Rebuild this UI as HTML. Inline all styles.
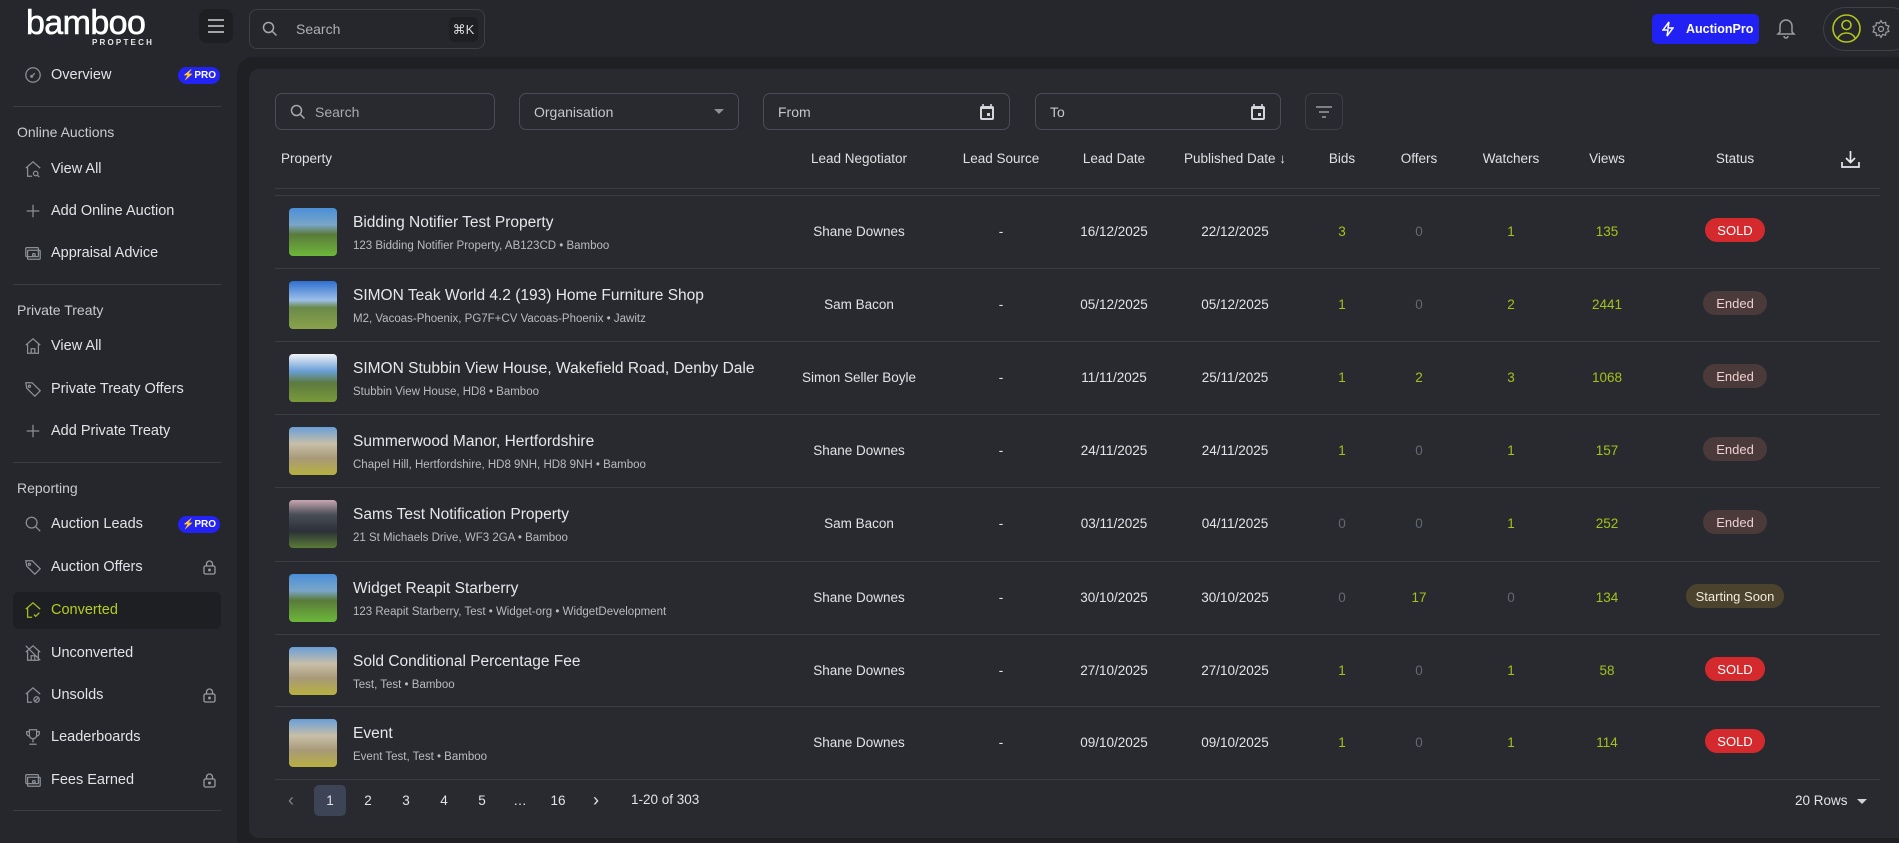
<!DOCTYPE html>
<html><head><meta charset="utf-8">
<style>
*{box-sizing:border-box;margin:0;padding:0}
body{width:1899px;height:843px;overflow:hidden;background:#25272c;font-family:"Liberation Sans",sans-serif;color:#e4e5e8;position:relative}
.abs{position:absolute}
.side .it{position:absolute;left:24px;height:30px;display:flex;align-items:center;font-size:14.5px;color:#e2e3e6}
.side .it svg{width:18px;height:18px;margin-right:9px;stroke:#8c8f96;fill:none;stroke-width:1.4}
.sec{position:absolute;left:17px;font-size:14px;color:#c9cbd0}
.div{position:absolute;left:13px;width:208px;height:1px;background:#3a3d44}
.pro{position:absolute;left:178px;width:42px;height:17px;border-radius:9px;background:#2323f5;color:#fff;font-size:10px;font-weight:bold;display:flex;align-items:center;justify-content:center}
.lock{position:absolute;left:203px;width:13px;height:15px}
.inp{position:absolute;top:93px;height:37px;border:1px solid #4a4d55;border-radius:7px;font-size:14px;color:#c5c7cc;display:flex;align-items:center;padding-left:14px}
.th{position:absolute;top:151px;font-size:13.5px;color:#dfe0e3;transform:translateX(-50%);white-space:nowrap}
.row{position:absolute;left:275px;width:1605px;height:73px;border-top:1px solid #3a3d44}
.c{position:absolute;top:28px;font-size:13.5px;transform:translateX(-50%);white-space:nowrap;color:#e2e3e6}
.g{color:#a3c21a}.z{color:#656870}
.thumb{position:absolute;left:14px;top:12px;width:48px;height:48px;border-radius:4px}
.t{position:absolute;left:78px;top:18px;font-size:15.5px;color:#e6e7ea;white-space:nowrap}
.s{position:absolute;left:78px;top:44px;font-size:11.5px;color:#b9bbc1;white-space:nowrap}
.b{position:absolute;top:22px;height:24px;border-radius:12px;font-size:13px;display:flex;align-items:center;justify-content:center;transform:translateX(-50%)}
.sold{background:#d42a2d;color:#fff;width:60px}
.end{background:#4a3a3a;color:#f0d0d0;width:64px}
.soon{background:#4c432e;color:#f1eadb;width:98px}
.pg{position:absolute;top:785px;width:32px;height:31px;display:flex;align-items:center;justify-content:center;font-size:13.5px;color:#e2e3e6;border-radius:5px}
</style></head><body>
<!-- header -->
<div class="abs" style="left:26px;top:6px;font-size:34px;color:#fff;letter-spacing:-0.6px;line-height:34px;-webkit-text-stroke:0.6px #fff">bamboo</div>
<div class="abs" style="left:92px;top:38px;font-size:8px;font-weight:bold;letter-spacing:2.2px;color:#e8e8e8">PROPTECH</div>
<div class="abs" style="left:199px;top:9px;width:34px;height:34px;border-radius:8px;background:#1d1f23;display:flex;align-items:center;justify-content:center">
<svg width="18" height="14" viewBox="0 0 18 14" stroke="#d0d2d6" stroke-width="1.6"><path d="M1 1h16M1 7h16M1 13h16"/></svg></div>
<div class="abs" style="left:249px;top:9px;width:236px;height:40px;border:1px solid #3d4047;border-radius:8px;display:flex;align-items:center">
<svg style="margin-left:12px" width="16" height="16" viewBox="0 0 16 16" fill="none" stroke="#a6a8ae" stroke-width="1.5"><circle cx="6.5" cy="6.5" r="5"/><path d="M10.5 10.5l4 4"/></svg>
<span style="margin-left:18px;font-size:14px;color:#aeb0b6">Search</span>
<span style="position:absolute;right:6px;top:7px;width:29px;height:25px;background:#1d1f23;border-radius:5px;font-size:13px;color:#d7d8db;display:flex;align-items:center;justify-content:center">⌘K</span></div>
<div class="abs" style="left:1652px;top:14px;width:107px;height:30px;background:#2121f4;border-radius:5px;display:flex;align-items:center;color:#fff;font-size:12.5px;font-weight:bold">
<svg style="margin:0 12px 0 10px" width="12" height="16" viewBox="0 0 12 16" fill="none" stroke="#fff" stroke-width="1.5"><path d="M7 1L1 9h5l-1 6 6-8H6z"/></svg>AuctionPro</div>
<svg class="abs" style="left:1776px;top:17px" width="20" height="22" viewBox="0 0 20 22" fill="none" stroke="#9a9ca2" stroke-width="1.5"><path d="M4 15V9a6 6 0 0 1 12 0v6l2 2H2z"/><path d="M8 19a2 2 0 0 0 4 0"/></svg>
<div class="abs" style="left:1823px;top:7px;width:90px;height:44px;border:1px solid #3e4148;border-radius:22px"></div>
<svg class="abs" style="left:1832px;top:14px" width="29" height="29" viewBox="0 0 29 29" fill="none" stroke="#b3c51c" stroke-width="1.6"><circle cx="14.5" cy="14.5" r="13.5"/><circle cx="14.5" cy="11" r="4.5"/><path d="M6 24c2-4 5-5 8.5-5s6.5 1 8.5 5"/></svg>
<svg class="abs" style="left:1871px;top:19px" width="20" height="20" viewBox="0 0 24 24" fill="none" stroke="#9a9ca2" stroke-width="1.5"><circle cx="12" cy="12" r="3"/><path d="M12 2l2 3 3.5-1 .5 3.5 3.5 1-1.5 3.5 1.5 3-3.5 1-.5 3.5-3.5-1L12 22l-2-3-3.5 1-.5-3.5-3.5-1L4 12 2.5 9 6 8l.5-3.5L10 5z"/></svg>
<!-- sidebar -->
<div class="side">
<div class="it" style="top:60px"><svg viewBox="0 0 20 20"><circle cx="10" cy="10" r="8"/><path d="M8 12l4-4"/><circle cx="8.5" cy="11.5" r="1"/></svg>Overview</div>
<div class="pro" style="top:67px">⚡PRO</div>
<div class="div" style="top:106px"></div>
<div class="sec" style="top:124px">Online Auctions</div>
<div class="it" style="top:154px"><svg viewBox="0 0 20 20"><path d="M2 9l8-7 8 7M4 8v10h5"/><circle cx="13" cy="15" r="2.5"/><path d="M15 17l2 2"/></svg>View All</div>
<div class="it" style="top:196px"><svg viewBox="0 0 20 20"><path d="M10 3v14M3 10h14"/></svg>Add Online Auction</div>
<div class="it" style="top:238px"><svg viewBox="0 0 20 20"><rect x="2" y="4" width="14" height="10" rx="1"/><rect x="4" y="7" width="14" height="10" rx="1"/><circle cx="11" cy="12" r="1.5"/></svg>Appraisal Advice</div>
<div class="div" style="top:284px"></div>
<div class="sec" style="top:302px">Private Treaty</div>
<div class="it" style="top:331px"><svg viewBox="0 0 20 20"><path d="M2 9l8-7 8 7M4 8v10h12V8"/><path d="M8 18v-5h4v5"/></svg>View All</div>
<div class="it" style="top:374px"><svg viewBox="0 0 20 20"><path d="M2 3h7l9 9-6 6-9-9z"/><circle cx="6" cy="7" r="1.2"/></svg>Private Treaty Offers</div>
<div class="it" style="top:416px"><svg viewBox="0 0 20 20"><path d="M10 3v14M3 10h14"/></svg>Add Private Treaty</div>
<div class="div" style="top:462px"></div>
<div class="sec" style="top:480px">Reporting</div>
<div class="it" style="top:509px"><svg viewBox="0 0 20 20"><circle cx="8.5" cy="8.5" r="6"/><path d="M13 13l5 5"/></svg>Auction Leads</div>
<div class="pro" style="top:516px">⚡PRO</div>
<div class="it" style="top:552px"><svg viewBox="0 0 20 20"><path d="M2 3h7l9 9-6 6-9-9z"/><circle cx="6" cy="7" r="1.2"/></svg>Auction Offers</div>
<svg class="lock" style="top:560px" viewBox="0 0 13 15" fill="none" stroke="#9a9ca2" stroke-width="1.3"><rect x="1" y="6" width="11" height="8" rx="1.5"/><path d="M3.5 6V4a3 3 0 0 1 6 0v2"/><circle cx="6.5" cy="10" r=".8"/></svg>
<div class="abs" style="left:13px;top:592px;width:208px;height:37px;border-radius:6px;background:#1d1f23"></div>
<div class="it" style="top:595px;color:#b6cc1e"><svg viewBox="0 0 20 20" style="stroke:#a8bd1c"><path d="M2 9l8-7 8 7M4 8v10h5"/><path d="M11 15l2 2 4-4"/></svg>Converted</div>
<div class="it" style="top:638px"><svg viewBox="0 0 20 20"><path d="M2 9l8-7 8 7M4 8v10h12V8M8 18v-5h4v5M2 2l16 16"/></svg>Unconverted</div>
<div class="it" style="top:680px"><svg viewBox="0 0 20 20"><path d="M2 9l8-7 8 7M4 8v10h5"/><circle cx="14" cy="15" r="3"/><path d="M12 17l4-4"/></svg>Unsolds</div>
<svg class="lock" style="top:688px" viewBox="0 0 13 15" fill="none" stroke="#9a9ca2" stroke-width="1.3"><rect x="1" y="6" width="11" height="8" rx="1.5"/><path d="M3.5 6V4a3 3 0 0 1 6 0v2"/><circle cx="6.5" cy="10" r=".8"/></svg>
<div class="it" style="top:722px"><svg viewBox="0 0 20 20"><path d="M6 2h8v6a4 4 0 0 1-8 0zM6 4H3v2a3 3 0 0 0 3 3M14 4h3v2a3 3 0 0 1-3 3M10 12v4M6 18h8"/></svg>Leaderboards</div>
<div class="it" style="top:765px"><svg viewBox="0 0 20 20"><rect x="2" y="4" width="14" height="10" rx="1"/><rect x="4" y="7" width="14" height="10" rx="1"/><circle cx="11" cy="12" r="1.5"/></svg>Fees Earned</div>
<svg class="lock" style="top:773px" viewBox="0 0 13 15" fill="none" stroke="#9a9ca2" stroke-width="1.3"><rect x="1" y="6" width="11" height="8" rx="1.5"/><path d="M3.5 6V4a3 3 0 0 1 6 0v2"/><circle cx="6.5" cy="10" r=".8"/></svg>
<div class="div" style="top:810px"></div>
</div>
<!-- main -->
<div class="abs" style="left:237px;top:57px;width:1662px;height:786px;background:#1f2024;border-top-left-radius:16px"></div>
<div class="abs" style="left:249px;top:69px;width:1650px;height:769px;background:#282a30;border-radius:10px 0 0 10px"></div>
<div class="inp" style="left:275px;width:220px"><svg width="16" height="16" viewBox="0 0 16 16" fill="none" stroke="#a6a8ae" stroke-width="1.5"><circle cx="6.5" cy="6.5" r="5"/><path d="M10.5 10.5l4 4"/></svg><span style="margin-left:9px;color:#a9abb1">Search</span></div>
<div class="inp" style="left:519px;width:220px">Organisation<span style="position:absolute;right:14px;top:15px;border:5px solid transparent;border-top:5px solid #8d9096"></span></div>
<div class="inp" style="left:763px;width:247px">From<svg style="position:absolute;right:14px;top:9px" width="16" height="18" viewBox="0 0 16 18"><rect x="1" y="3" width="14" height="14" rx="2" fill="#d4d6da"/><rect x="3" y="6" width="10" height="9" fill="#282a30"/><rect x="8" y="10" width="3" height="3" fill="#d4d6da"/><path d="M4 1v3M12 1v3" stroke="#d4d6da" stroke-width="1.6"/></svg></div>
<div class="inp" style="left:1035px;width:246px">To<svg style="position:absolute;right:14px;top:9px" width="16" height="18" viewBox="0 0 16 18"><rect x="1" y="3" width="14" height="14" rx="2" fill="#d4d6da"/><rect x="3" y="6" width="10" height="9" fill="#282a30"/><rect x="8" y="10" width="3" height="3" fill="#d4d6da"/><path d="M4 1v3M12 1v3" stroke="#d4d6da" stroke-width="1.6"/></svg></div>
<div class="inp" style="left:1305px;width:38px;padding:0;justify-content:center;border-color:#3c3f46"><svg width="18" height="14" viewBox="0 0 18 14" stroke="#9a9ca2" stroke-width="1.6"><path d="M1 2h16M4 7h10M7 12h4"/></svg></div>
<div class="th" style="left:281px;transform:none">Property</div>
<div class="th" style="left:859px">Lead Negotiator</div>
<div class="th" style="left:1001px">Lead Source</div>
<div class="th" style="left:1114px">Lead Date</div>
<div class="th" style="left:1235px">Published Date ↓</div>
<div class="th" style="left:1342px">Bids</div>
<div class="th" style="left:1419px">Offers</div>
<div class="th" style="left:1511px">Watchers</div>
<div class="th" style="left:1607px">Views</div>
<div class="th" style="left:1735px">Status</div>
<svg class="abs" style="left:1841px;top:150px" width="19" height="19" viewBox="0 0 19 19" fill="none" stroke="#e8e9eb" stroke-width="1.7"><path d="M9.5 1v11M5 8l4.5 4.5L14 8M1 12v5h17v-5"/></svg>
<div class="abs" style="left:275px;top:188px;width:1605px;height:1px;background:#3a3d44"></div>

<div class="row" style="top:195px"><div class="thumb" style="background:linear-gradient(#4a8fd8 0%,#7aa6c8 35%,#5a7a3a 55%,#6cb83a 100%)"></div><div class="t">Bidding Notifier Test Property</div><div class="s">123 Bidding Notifier Property, AB123CD • Bamboo</div>
<div class="c" style="left:584px">Shane Downes</div><div class="c" style="left:726px">-</div><div class="c" style="left:839px">16/12/2025</div><div class="c" style="left:960px">22/12/2025</div><div class="c g" style="left:1067px">3</div><div class="c z" style="left:1144px">0</div><div class="c g" style="left:1236px">1</div><div class="c g" style="left:1332px">135</div><div class="b sold" style="left:1460px">SOLD</div></div>
<div class="row" style="top:268px"><div class="thumb" style="background:linear-gradient(#2f6fd0 0%,#9cc0e8 40%,#6a8a4a 55%,#8aa24a 100%)"></div><div class="t">SIMON Teak World 4.2 (193) Home Furniture Shop</div><div class="s">M2, Vacoas-Phoenix, PG7F+CV Vacoas-Phoenix • Jawitz</div>
<div class="c" style="left:584px">Sam Bacon</div><div class="c" style="left:726px">-</div><div class="c" style="left:839px">05/12/2025</div><div class="c" style="left:960px">05/12/2025</div><div class="c g" style="left:1067px">1</div><div class="c z" style="left:1144px">0</div><div class="c g" style="left:1236px">2</div><div class="c g" style="left:1332px">2441</div><div class="b end" style="left:1460px">Ended</div></div>
<div class="row" style="top:341px"><div class="thumb" style="background:linear-gradient(#f2f4f7 0%,#6aa0d8 35%,#5d7a40 60%,#7a9a3a 100%)"></div><div class="t">SIMON Stubbin View House, Wakefield Road, Denby Dale</div><div class="s">Stubbin View House, HD8 • Bamboo</div>
<div class="c" style="left:584px">Simon Seller Boyle</div><div class="c" style="left:726px">-</div><div class="c" style="left:839px">11/11/2025</div><div class="c" style="left:960px">25/11/2025</div><div class="c g" style="left:1067px">1</div><div class="c g" style="left:1144px">2</div><div class="c g" style="left:1236px">3</div><div class="c g" style="left:1332px">1068</div><div class="b end" style="left:1460px">Ended</div></div>
<div class="row" style="top:414px"><div class="thumb" style="background:linear-gradient(#6a9ed8 0%,#c8bfa8 35%,#a89a78 65%,#b8b040 100%)"></div><div class="t">Summerwood Manor, Hertfordshire</div><div class="s">Chapel Hill, Hertfordshire, HD8 9NH, HD8 9NH • Bamboo</div>
<div class="c" style="left:584px">Shane Downes</div><div class="c" style="left:726px">-</div><div class="c" style="left:839px">24/11/2025</div><div class="c" style="left:960px">24/11/2025</div><div class="c g" style="left:1067px">1</div><div class="c z" style="left:1144px">0</div><div class="c g" style="left:1236px">1</div><div class="c g" style="left:1332px">157</div><div class="b end" style="left:1460px">Ended</div></div>
<div class="row" style="top:487px"><div class="thumb" style="background:linear-gradient(#c8a8b0 0%,#4a4e58 30%,#2c3038 65%,#5a7a38 100%)"></div><div class="t">Sams Test Notification Property</div><div class="s">21 St Michaels Drive, WF3 2GA • Bamboo</div>
<div class="c" style="left:584px">Sam Bacon</div><div class="c" style="left:726px">-</div><div class="c" style="left:839px">03/11/2025</div><div class="c" style="left:960px">04/11/2025</div><div class="c z" style="left:1067px">0</div><div class="c z" style="left:1144px">0</div><div class="c g" style="left:1236px">1</div><div class="c g" style="left:1332px">252</div><div class="b end" style="left:1460px">Ended</div></div>
<div class="row" style="top:561px"><div class="thumb" style="background:linear-gradient(#4a8fd8 0%,#7aa6c8 35%,#5a7a3a 55%,#6cb83a 100%)"></div><div class="t">Widget Reapit Starberry</div><div class="s">123 Reapit Starberry, Test • Widget-org • WidgetDevelopment</div>
<div class="c" style="left:584px">Shane Downes</div><div class="c" style="left:726px">-</div><div class="c" style="left:839px">30/10/2025</div><div class="c" style="left:960px">30/10/2025</div><div class="c z" style="left:1067px">0</div><div class="c g" style="left:1144px">17</div><div class="c z" style="left:1236px">0</div><div class="c g" style="left:1332px">134</div><div class="b soon" style="left:1460px">Starting Soon</div></div>
<div class="row" style="top:634px"><div class="thumb" style="background:linear-gradient(#6a9ed8 0%,#c8bfa8 35%,#a89a78 65%,#b8b040 100%)"></div><div class="t">Sold Conditional Percentage Fee</div><div class="s">Test, Test • Bamboo</div>
<div class="c" style="left:584px">Shane Downes</div><div class="c" style="left:726px">-</div><div class="c" style="left:839px">27/10/2025</div><div class="c" style="left:960px">27/10/2025</div><div class="c g" style="left:1067px">1</div><div class="c z" style="left:1144px">0</div><div class="c g" style="left:1236px">1</div><div class="c g" style="left:1332px">58</div><div class="b sold" style="left:1460px">SOLD</div></div>
<div class="row" style="top:706px"><div class="thumb" style="background:linear-gradient(#6a9ed8 0%,#c8bfa8 35%,#a89a78 65%,#b8b040 100%)"></div><div class="t">Event</div><div class="s">Event Test, Test • Bamboo</div>
<div class="c" style="left:584px">Shane Downes</div><div class="c" style="left:726px">-</div><div class="c" style="left:839px">09/10/2025</div><div class="c" style="left:960px">09/10/2025</div><div class="c g" style="left:1067px">1</div><div class="c z" style="left:1144px">0</div><div class="c g" style="left:1236px">1</div><div class="c g" style="left:1332px">114</div><div class="b sold" style="left:1460px">SOLD</div></div>
<div class="abs" style="left:275px;top:779px;width:1605px;height:1px;background:#3a3d44"></div>
<!-- pagination -->
<div class="pg" style="left:275px;color:#80838a;font-size:18px">‹</div>
<div class="pg" style="left:314px;background:#3d4456">1</div>
<div class="pg" style="left:352px">2</div>
<div class="pg" style="left:390px">3</div>
<div class="pg" style="left:428px">4</div>
<div class="pg" style="left:466px">5</div>
<div class="pg" style="left:504px">…</div>
<div class="pg" style="left:542px">16</div>
<div class="pg" style="left:580px;font-size:18px">›</div>
<div class="abs" style="left:631px;top:792px;font-size:13.5px;color:#e2e3e6">1-20 of 303</div>
<div class="abs" style="left:1795px;top:793px;font-size:13.5px;color:#e2e3e6">20 Rows</div>
<div class="abs" style="left:1857px;top:799px;border:5px solid transparent;border-top:5px solid #d0d2d6"></div>
</body></html>
